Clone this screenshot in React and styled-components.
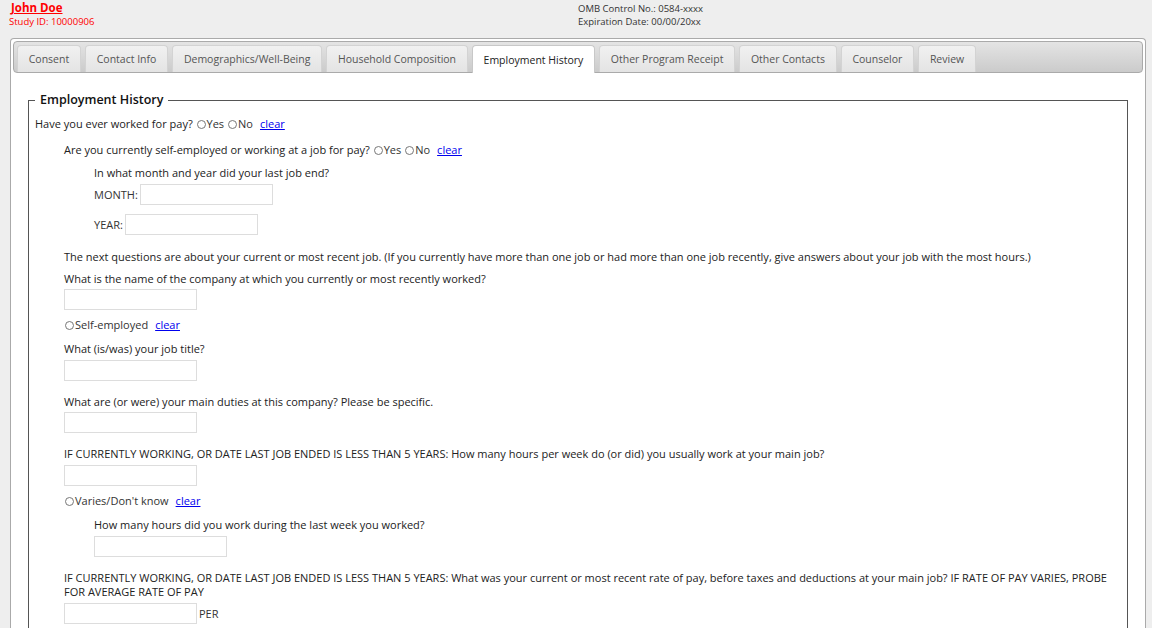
import React from "react";
import styled, { createGlobalStyle } from "styled-components";

const Global = createGlobalStyle`
  html, body { margin: 0; padding: 0; background: #eeeeee; }
  body { font-family: "Open Sans", "Noto Sans", sans-serif; font-size: 11px; color: #222; }
  * { box-sizing: border-box; }
`;

const Header = styled.header`
  display: grid;
  grid-template-columns: 578px 1fr;
  height: 38px;
  padding-top: 1px;
`;

const Who = styled.div`
  padding-left: 9px;
`;

const Name = styled.a`
  display: block;
  margin-left: 2px;
  font-weight: 700;
  font-size: 11.5px;
  line-height: 14px;
  color: #ff0000;
  text-decoration: underline;
`;

const Small = styled.div`
  font-size: 9.5px;
  line-height: 13px;
  color: ${(p) => p.$color || "#333"};
`;

const Omb = styled.div`
  padding-top: 1px;
`;

const Panel = styled.div`
  margin: 0 6px 0 10px;
  border: 1px solid #aaaaaa;
  border-bottom: none;
  border-radius: 4px 4px 0 0;
  background: #ffffff;
  padding: 2px 2px 0 2px;
  height: 590px;
  overflow: hidden;
`;

const TabBar = styled.ul`
  display: flex;
  list-style: none;
  margin: 0;
  padding: 3px 0 0 3px;
  gap: 4px;
  height: 32px;
  border: 1px solid #aaaaaa;
  border-radius: 4px;
  background: linear-gradient(#e4e4e4, #cbcbcb);
`;

const Tab = styled.li`
  height: ${(p) => (p.$active ? "28px" : "27px")};
  padding: 0 10.75px;
  display: flex;
  align-items: center;
  border: 1px solid ${(p) => (p.$active ? "#c8c8c8" : "#d3d3d3")};
  border-bottom: none;
  border-radius: 4px 4px 0 0;
  background: ${(p) =>
    p.$active ? "#ffffff" : "linear-gradient(#f1f1f1, #e4e4e4)"};
  color: ${(p) => (p.$active ? "#222" : "#555")};
  font-size: 10.5px;
  white-space: nowrap;
`;

const Body = styled.div`
  padding: 19px 15px 0 15px;
`;

const Fieldset = styled.fieldset`
  margin: 0;
  border: 1px solid #555;
  padding: 1px 6px 20px 6px;
  min-width: 0;
`;

const Legend = styled.legend`
  margin-left: 0;
  padding: 0 5px;
  font-size: 12.5px;
  font-weight: 600;
  color: #111;
  line-height: 16px;
`;

const Line = styled.div`
  margin-top: ${(p) => p.$mt || 0}px;
  margin-left: ${(p) => p.$indent || 0}px;
  line-height: 14px;
  color: #222;
  display: flex;
  align-items: center;
  flex-wrap: wrap;
`;

const Text = styled.div`
  margin-top: ${(p) => p.$mt || 0}px;
  margin-left: ${(p) => p.$indent || 0}px;
  line-height: 14px;
  color: #222;
  max-width: 1060px;
`;

const Radio = styled.span`
  display: inline-block;
  width: 9px;
  height: 9px;
  border: 1px solid #777;
  border-radius: 50%;
  margin: 0 1px 0 1px;
  background: #fff;
`;

const Opt = styled.span`
  display: inline-flex;
  align-items: center;
  color: #333;
  margin-right: ${(p) => p.$mr || 0}px;
`;

const Clear = styled.a`
  color: #0000ee;
  text-decoration: underline;
  margin-left: 7px;
  cursor: pointer;
`;

const Input = styled.input`
  display: block;
  width: 133px;
  height: 21px;
  border: 1px solid #dddddd;
  background: #fff;
  margin: 0;
  padding: 0 3px;
  font: inherit;
`;

const Field = styled.div`
  display: flex;
  align-items: center;
  margin-top: ${(p) => p.$mt || 0}px;
  margin-left: ${(p) => p.$indent || 0}px;
  color: #333;
  gap: 2px;
`;

const tabs = [
  "Consent",
  "Contact Info",
  "Demographics/Well-Being",
  "Household Composition",
  "Employment History",
  "Other Program Receipt",
  "Other Contacts",
  "Counselor",
  "Review",
];

function YesNo() {
  return (
    <>
      <Opt $mr={3}>
        <Radio />
        Yes
      </Opt>
      <Opt>
        <Radio />
        No
      </Opt>
      <Clear>clear</Clear>
    </>
  );
}

export default function App() {
  return (
    <>
      <Global />
      <Header>
        <Who>
          <Name>John Doe</Name>
          <Small $color="#ff0000">Study ID: 10000906</Small>
        </Who>
        <Omb>
          <Small>OMB Control No.: 0584-xxxx</Small>
          <Small>Expiration Date: 00/00/20xx</Small>
        </Omb>
      </Header>
      <Panel>
        <TabBar>
          {tabs.map((t) => (
            <Tab key={t} $active={t === "Employment History"}>
              {t}
            </Tab>
          ))}
        </TabBar>
        <Body>
          <Fieldset>
            <Legend>Employment History</Legend>
            <Line $mt={8}>
              Have you ever worked for pay?&nbsp;
              <YesNo />
            </Line>
            <Line $mt={12} $indent={29}>
              Are you currently self-employed or working at a job for pay?&nbsp;
              <YesNo />
            </Line>
            <Text $mt={9} $indent={59}>
              In what month and year did your last job end?
            </Text>
            <Field $mt={4} $indent={59}>
              MONTH: <Input />
            </Field>
            <Field $mt={9} $indent={59}>
              YEAR: <Input />
            </Field>
            <Text $mt={15} $indent={29}>
              The next questions are about your current or most recent job. (If
              you currently have more than one job or had more than one job
              recently, give answers about your job with the most hours.)
            </Text>
            <Text $mt={8} $indent={29}>
              What is the name of the company at which you currently or most
              recently worked?
            </Text>
            <Field $mt={3} $indent={29}>
              <Input />
            </Field>
            <Line $mt={8} $indent={29}>
              <Opt>
                <Radio />
                Self-employed
              </Opt>
              <Clear>clear</Clear>
            </Line>
            <Text $mt={10} $indent={29}>
              What (is/was) your job title?
            </Text>
            <Field $mt={4} $indent={29}>
              <Input />
            </Field>
            <Text $mt={14} $indent={29}>
              What are (or were) your main duties at this company? Please be
              specific.
            </Text>
            <Field $mt={3} $indent={29}>
              <Input />
            </Field>
            <Text $mt={14} $indent={29}>
              IF CURRENTLY WORKING, OR DATE LAST JOB ENDED IS LESS THAN 5 YEARS:
              How many hours per week do (or did) you usually work at your main
              job?
            </Text>
            <Field $mt={4} $indent={29}>
              <Input />
            </Field>
            <Line $mt={8} $indent={29}>
              <Opt>
                <Radio />
                Varies/Don't know
              </Opt>
              <Clear>clear</Clear>
            </Line>
            <Text $mt={10} $indent={59}>
              How many hours did you work during the last week you worked?
            </Text>
            <Field $mt={4} $indent={59}>
              <Input />
            </Field>
            <Text $mt={14} $indent={29}>
              IF CURRENTLY WORKING, OR DATE LAST JOB ENDED IS LESS THAN 5 YEARS:
              What was your current or most recent rate of pay, before taxes and
              deductions at your main job? IF RATE OF PAY VARIES, PROBE FOR
              AVERAGE RATE OF PAY
            </Text>
            <Field $mt={4} $indent={29}>
              <Input />
              PER
            </Field>
          </Fieldset>
        </Body>
      </Panel>
    </>
  );
}
